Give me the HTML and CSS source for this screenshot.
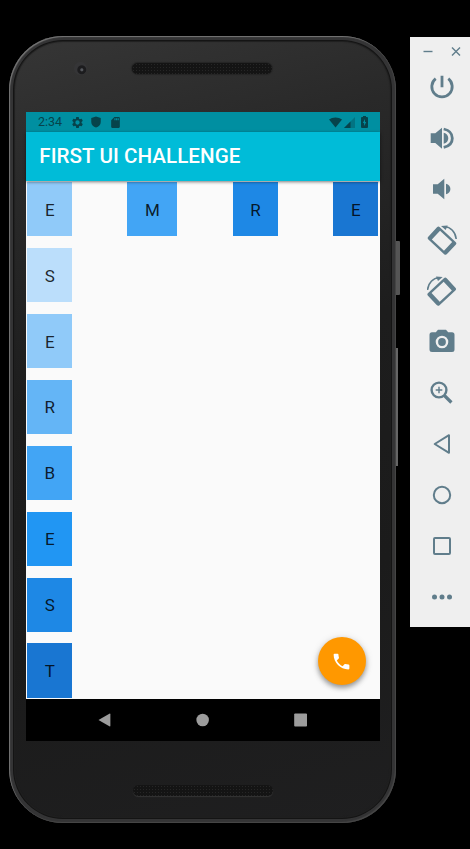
FILE: index.html
```html
<!DOCTYPE html>
<html lang="en">
<head>
<meta charset="utf-8">
<title>First UI Challenge</title>
<link rel="stylesheet" href="styles.css">
</head>
<body>
<main class="desk">
  <section class="phone">
    <i class="side-key power-key"></i>
    <i class="side-key volume-key"></i>
    <div class="bezel bezel-top">
      <i class="camera"></i>
      <i class="speaker"></i>
    </div>
    <div class="screen">
      <div class="status">
        <span class="clock">2:34</span>
        <svg class="st gear" viewBox="0 0 24 24"><path d="M19.4 13c0-.3.1-.6.1-1s0-.7-.1-1l2.100-1.650c.2-.15.25-.4.12-.640l-2-3.460c-.12-.220-.390-.3-.610-.220l-2.490 1c-.520-.4-1.080-.730-1.690-.980l-.380-2.650A.49.49 0 0 0 14 2h-4c-.25 0-.46.180-.490.420l-.380 2.650c-.610.250-1.170.590-1.690.980l-2.490-1c-.230-.090-.490 0-.610.220l-2 3.460c-.13.220-.07.490.12.640L4.570 11c-.04.320-.07.650-.07 1s.03.660.07 1l-2.110 1.650c-.190.150-.240.420-.120.640l2 3.460c.12.220.390.3.610.220l2.490-1c.520.4 1.080.730 1.690.980l.380 2.650c.03.240.240.4.490.4h4c.25 0 .46-.160.490-.4l.380-2.650c.610-.250 1.170-.590 1.690-.980l2.490 1c.230.090.490 0 .610-.220l2-3.460c.12-.220.07-.490-.12-.640zM12 16a4 4 0 1 1 0-8 4 4 0 0 1 0 8z"/></svg>
        <svg class="st shield" viewBox="0 0 24 24"><path d="M12 1 2.500 4v8c0 5.500 4 9.500 9.500 11 5.500-1.500 9.500-5.500 9.500-11V4z"/></svg>
        <svg class="st card" viewBox="0 0 24 24"><path d="M18 2h-8L4 8v12c0 1.100.9 2 2 2h12c1.100 0 2-.9 2-2V4c0-1.100-.9-2-2-2zm-6 6h-2V4h2zm3 0h-2V4h2zm3 0h-2V4h2z"/></svg>
        <span class="status-right">
          <svg class="wifi" viewBox="0 0 13 11"><path d="M6.500 10.500 0 2.500C3.500-.3 9.500-.3 13 2.500z"/></svg>
          <svg class="signal" viewBox="0 0 11 11"><path opacity=".35" d="M0 11 11 0v11z"/><path d="M0 11 6.500 4.500V11z"/></svg>
          <svg class="battery" viewBox="0 0 7 12"><path fill-rule="evenodd" d="M2 0h3v1h1q1 0 1 1v9q0 1-1 1H1q-1 0-1-1V2q0-1 1-1h1zM4 3 1.800 7h1.300v3L5.200 6H4z"/></svg>
        </span>
      </div>
      <header class="appbar"><h1>FIRST UI CHALLENGE</h1></header>
      <div class="content">
        <div class="column">
          <div class="tile b200">E</div>
          <div class="tile b100">S</div>
          <div class="tile b200">E</div>
          <div class="tile b300">R</div>
          <div class="tile b400">B</div>
          <div class="tile b500">E</div>
          <div class="tile b600">S</div>
          <div class="tile b700">T</div>
        </div>
        <div class="row">
          <div class="tile wide b400">M</div>
          <div class="tile b600">R</div>
          <div class="tile b700">E</div>
        </div>
        <button class="fab" aria-label="Call"><svg viewBox="0 0 24 24"><path d="M6.620 10.790c1.440 2.830 3.760 5.140 6.590 6.590l2.200-2.200c.270-.270.670-.360 1.020-.240 1.120.370 2.330.570 3.570.570.550 0 1 .450 1 1V20c0 .550-.450 1-1 1-9.390 0-17-7.610-17-17 0-.550.450-1 1-1h3.500c.550 0 1 .450 1 1 0 1.250.2 2.450.570 3.570.110.350.030.740-.250 1.020z"/></svg></button>
      </div>
      <nav class="navbar">
        <svg viewBox="0 0 14 14"><path d="M.5 7 12 .3q1-.5 1 .6v12.200q0 1-1 .6z"/></svg>
        <svg viewBox="0 0 14 14"><circle cx="7" cy="7" r="6.600"/></svg>
        <svg viewBox="0 0 14 14"><rect x=".2" y=".2" width="13.600" height="13.600" rx="1"/></svg>
      </nav>
    </div>
    <div class="bezel bezel-bottom"><i class="speaker"></i></div>
  </section>
  <aside class="tools">
    <div class="window-controls">
      <svg viewBox="0 0 10 10"><path d="M.5 5.500h9"/></svg>
      <svg viewBox="0 0 10 10"><path d="m1 1.500 8 8M9 1.500l-8 8"/></svg>
    </div>
    <svg class="tool" viewBox="0 0 30 30"><g class="line thick"><path d="M15 3.700v11.600M8.700 6.700a10.200 10.200 0 1 0 12.600 0"/></g></svg>
    <svg class="tool" viewBox="0 0 30 30"><path d="M3.700 10.300h4.600L15 4.700v21l-6.700-5.700H3.700zM16.700 9.700c3 .8 4.600 3 4.600 5.500s-1.600 4.700-4.600 5.500z"/><path class="line thick" d="M16.700 6c5.500 1.200 8.600 4.800 8.600 9.200s-3.100 8-8.600 9.200"/></svg>
    <svg class="tool" viewBox="0 0 30 30"><path d="M6 10.300h4.700l6.600-5.500v20.400l-6.600-5.500H6zM19 9.700c2.900.8 4.400 3 4.400 5.300s-1.500 4.500-4.400 5.300z"/></svg>
    <svg class="tool" viewBox="0 0 30 30"><g id="rotate"><path fill-rule="evenodd" transform="translate(15 15.700) rotate(43)" d="M-10.800-8.400h21.600q2 0 2 2V6.400q0 2-2 2h-21.600q-2 0-2-2V-6.400q0-2 2-2zM-8.300-6V6H8.300V-6z"/><path d="m14 1 6.700-.6-2 4.600z"/><path class="line arc" d="M17.500 1.800C23.500 2 28.500 6.700 29.200 14"/></g></svg>
    <svg class="tool" viewBox="0 0 30 30"><use href="#rotate" transform="translate(29.700 0) scale(-1 1)"/></svg>
    <svg class="tool" viewBox="0 0 30 30"><path fill-rule="evenodd" d="m11 2.800-2.200 2.500H5q-2.500 0-2.500 2.500v14.700Q2.500 25 5 25h20q2.500 0 2.500-2.500V7.800q0-2.500-2.500-2.500h-3.800L19 2.800zM15 8.700a6.300 6.300 0 1 1 0 12.600 6.300 6.300 0 0 1 0-12.600z"/><circle cx="15" cy="15" r="3.900"/></svg>
    <svg class="tool" viewBox="0 0 30 30"><g class="line"><circle cx="12" cy="12" r="7.400" stroke-width="2.400"/><path stroke-width="3.200" d="m17.400 17.500 7 7"/><path stroke-width="1.400" d="M8.700 12h6.600M12 8.700v6.600"/></g></svg>
    <svg class="tool" viewBox="0 0 30 30"><path class="line" stroke-linejoin="round" d="M22 6.200v17.600L7.700 15z"/></svg>
    <svg class="tool" viewBox="0 0 30 30"><circle class="line" cx="15" cy="15" r="8.200"/></svg>
    <svg class="tool" viewBox="0 0 30 30"><rect class="line" x="7" y="7" width="16" height="16" rx="1"/></svg>
    <svg class="tool" viewBox="0 0 30 30"><circle cx="7.500" cy="15" r="2.500"/><circle cx="15" cy="15" r="2.500"/><circle cx="22.500" cy="15" r="2.500"/></svg>
  </aside>
</main>
</body>
</html>
```
FILE: styles.css
```css
* { box-sizing: border-box; }
body { margin: 0; background: #000; font-family: Roboto, sans-serif; }
svg { display: block; flex: none; }
.desk { display: flex; align-items: flex-start; height: 849px; overflow: hidden; }

.phone {
  position: relative;
  flex: none;
  width: 387px;
  height: 787px;
  margin: 36px 0 0 9px;
  padding: 0 16px 0 17px;
  border-radius: 54px;
  background: linear-gradient(165deg, #363636 0%, #292929 18%, #1d1d1d 42%, #1b1b1b 70%, #1f1f20 100%);
  box-shadow:
    inset 1px 1px 1px #777,
    inset -1px -1px 1px #484848,
    inset 0 0 0 4px #343435,
    inset 0 0 0 5px #141414,
    inset 0 0 1px 6px #202020;
}
.side-key { position: absolute; background: #555; }
.power-key { left: 387px; top: 205px; width: 4px; height: 54px; border-radius: 0 1px 1px 0; }
.volume-key { left: 387px; top: 312px; width: 2px; height: 118px; background: #666; }

.bezel { display: flex; }
.bezel-top { height: 76px; padding: 27px 0 0 49px; }
.bezel-bottom { height: 82px; padding: 44px 0 0 107px; }
.camera {
  width: 13px;
  height: 13px;
  margin: -1px 45px 0 -1px;
  border-radius: 50%;
  background: radial-gradient(circle at 60% 60%, #55585d 0 1px, #1c1c1e 2px 4px, #353537 5px);
}
.speaker {
  width: 140px;
  height: 11px;
  border-radius: 6px;
  background-color: #141414;
  background-image: radial-gradient(circle, #262626 0 .6px, transparent 1px);
  background-size: 3px 3px;
  box-shadow: 0 0 1px 1px #252525;
}
.bezel-bottom .speaker { box-shadow: 0 1px 1px #333; }

.screen { display: flex; flex-direction: column; height: 629px; background: #fafafa; }
.status {
  display: flex;
  align-items: center;
  height: 20px;
  padding: 0 12px;
  background: #008fa1;
  color: #06434b;
}
.status svg { fill: #06434b; }
.clock { width: 33px; font-size: 12.500px; line-height: 20px; }
.st { width: 13px; height: 13px; }
.shield { width: 12px; height: 12px; margin-left: 6px; }
.card { width: 13px; height: 13px; margin-left: 7px; }
.status-right { display: flex; align-items: center; margin-left: auto; }
.wifi { width: 13px; height: 11px; }
.signal { width: 11px; height: 11px; margin: 0 6px 0 2px; }
.battery { width: 7px; height: 12px; }

.appbar {
  z-index: 1;
  display: flex;
  align-items: center;
  height: 48.500px;
  padding: 0 0 0 13.300px;
  background: #00bcd8;
  box-shadow: 0 1px 3px rgba(0, 0, 0, .5);
}
h1 { margin: 0; color: #fff; font-size: 20.600px; font-weight: 500; line-height: 24px; letter-spacing: .05px; white-space: nowrap; }

.content { position: relative; display: flex; justify-content: space-between; height: 518.500px; padding: 1.700px 1.700px 1.300px 1.300px; }
.column { display: flex; flex-direction: column; justify-content: space-between; }
.row { display: flex; align-items: flex-start; gap: 55.200px; }
.tile {
  display: grid;
  place-items: center;
  width: 44.900px;
  height: 54.200px;
  padding-top: 1px;
  color: rgba(0, 0, 0, .84);
  font-size: 17px;
  line-height: 20px;
}
.wide { width: 50px; }
.row .b600 { width: 45.700px; }
.b100 { background: #bbdefb; }
.b200 { background: #90caf9; }
.b300 { background: #64b5f6; }
.b400 { background: #42a5f5; }
.b500 { background: #2196f3; }
.b600 { background: #1e88e5; }
.b700 { background: #1976d2; }

.fab {
  position: absolute;
  right: 14.300px;
  bottom: 13.600px;
  display: grid;
  place-items: center;
  width: 48px;
  height: 48px;
  padding: 0;
  border: 0;
  border-radius: 50%;
  background: #ff9800;
  box-shadow: 0 3px 5px rgba(0, 0, 0, .35), 0 1px 8px rgba(0, 0, 0, .12);
}
.fab svg { width: 21px; height: 21px; fill: #fff; }

.navbar { display: flex; justify-content: center; align-items: center; gap: 84.800px; height: 42px; padding-right: 1px; background: #000; }
.navbar svg { width: 13.300px; height: 14px; fill: #9c9c9c; }

.tools {
  display: flex;
  flex: none;
  flex-direction: column;
  align-items: center;
  gap: 21px;
  width: 60px;
  height: 590px;
  margin: 37px 0 0 14px;
  padding-left: 4px;
  background: #efefef;
}
.window-controls { display: flex; gap: 18px; height: 14px; padding-top: 9px; }
.window-controls svg { width: 10px; height: 10px; fill: none; stroke: #607d8b; stroke-width: 1.400; }
.tool { width: 30px; height: 30px; fill: #607d8b; }
.line { fill: none; stroke: #607d8b; stroke-width: 2; }
.thick { stroke-width: 2.800; }
.arc { stroke-width: 1.600; }
```
